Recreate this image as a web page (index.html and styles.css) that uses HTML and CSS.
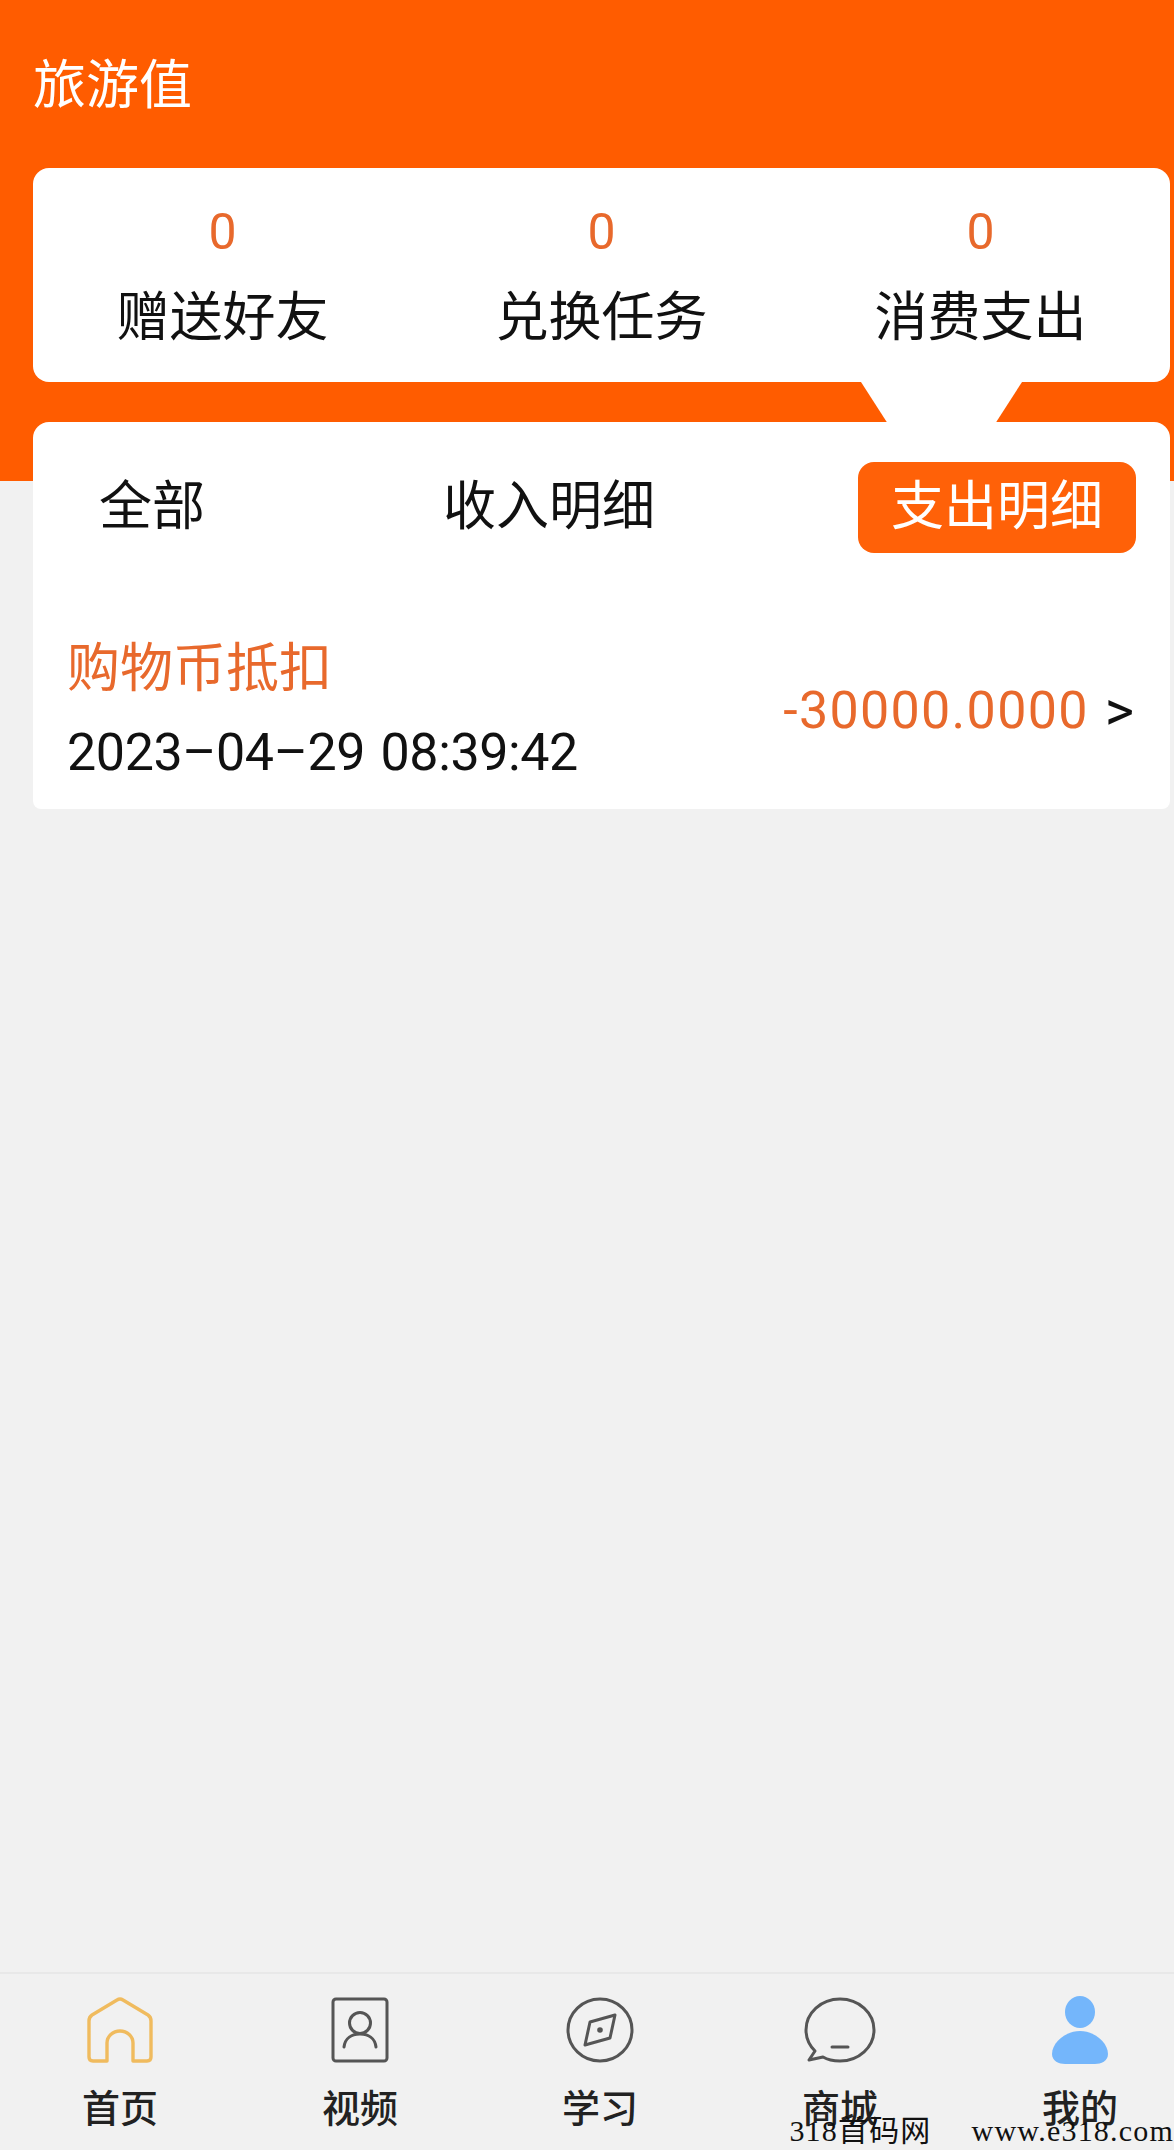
FILE: index.html
```html
<!doctype html>
<html>
  <head>
    <meta charset="utf-8">
    <title>旅游值</title>
    <link rel="stylesheet" href="styles.css">
  </head>
  <body>
    <div class="page">
      <h1 class="title">旅游值</h1>

      <div class="stats">
        <div class="stat"><span class="stat-num">0</span><span class="stat-label">赠送好友</span></div>
        <div class="stat"><span class="stat-num">0</span><span class="stat-label">兑换任务</span></div>
        <div class="stat"><span class="stat-num">0</span><span class="stat-label">消费支出</span></div>
      </div>

      <div class="detail">
        <div class="tabs">
          <div class="tab tab-all">全部</div>
          <div class="tab tab-in">收入明细</div>
          <div class="tab tab-on">支出明细</div>
        </div>
        <div class="record">
          <div class="record-left">
            <div class="record-name">购物币抵扣</div>
            <div class="record-date">2023–04–29 08:39:42</div>
          </div>
          <div class="record-right">
            <span class="record-amount">-30000.0000</span>
            <span class="record-arrow">&gt;</span>
          </div>
        </div>
      </div>

      <div class="nav">
        <div class="nav-item">
          <svg class="icon" width="66" height="66" viewBox="0 0 66 66" fill="none" stroke="#f0bb5e" stroke-width="3.4" stroke-linejoin="round">
            <path d="M30 3 Q33 1 36 3 L61 18 Q64 20 64 24 V60 Q64 64 60 64 H46 V46 A13 12 0 0 0 20 46 V64 H6 Q2 64 2 60 V24 Q2 20 5 18 Z"/>
          </svg>
          <span class="nav-label">首页</span>
        </div>
        <div class="nav-item">
          <svg class="icon" width="58" height="66" viewBox="0 0 58 66" fill="none" stroke="#555" stroke-width="3" stroke-linecap="round">
            <rect x="2" y="2" width="54" height="62" rx="3"/>
            <circle cx="29" cy="26" r="10.5"/>
            <path d="M13 50 C14 41 21 37 29 37 C37 37 44 41 45 50"/>
          </svg>
          <span class="nav-label">视频</span>
        </div>
        <div class="nav-item">
          <svg class="icon" width="68" height="66" viewBox="0 0 68 66" fill="none" stroke="#555" stroke-width="3" stroke-linejoin="round">
            <ellipse cx="34" cy="33" rx="32" ry="31"/>
            <path d="M49 18 L44 41 L19 48 L24 25 Z"/>
            <circle cx="34" cy="33" r="2.8" fill="#555" stroke="none"/>
          </svg>
          <span class="nav-label">学习</span>
        </div>
        <div class="nav-item">
          <svg class="icon" width="72" height="66" viewBox="0 0 72 66" fill="none" stroke="#555" stroke-width="3" stroke-linejoin="round" stroke-linecap="round">
            <path d="M36 2 C17 2 2 16 2 33 C2 42 6 49 11 54 L5 63 L19 60 C24 63 30 64 36 64 C55 64 70 50 70 33 C70 16 55 2 36 2 Z"/>
            <path d="M28 50 H44"/>
          </svg>
          <span class="nav-label">商城</span>
        </div>
        <div class="nav-item">
          <svg class="icon" width="58" height="68" viewBox="0 0 58 68" fill="#74b6fb">
            <ellipse cx="29" cy="16" rx="15" ry="16"/>
            <path d="M29 35 C44 35 57 47 57 58 C57 65 50 68 44 68 H14 C8 68 1 65 1 58 C1 47 14 35 29 35 Z"/>
          </svg>
          <span class="nav-label">我的</span>
        </div>
      </div>

      <div class="watermark">318首码网<span class="watermark-url">www.e318.com</span></div>
    </div>
  </body>
</html>
```

FILE: styles.css
```css
html, body {
  margin: 0;
  padding: 0;
}
body {
  font-family: Roboto, "Noto Sans CJK SC", sans-serif;
  color: #111;
  overflow: hidden;
}
.page {
  position: relative;
  display: flex;
  flex-direction: column;
  width: 1174px;
  height: 2150px;
  overflow: hidden;
  background: linear-gradient(#ff5c00 481px, #f1f1f1 481px);
}
.title {
  margin: 0;
  padding: 48px 0 0 33px;
  height: 168px;
  box-sizing: border-box;
  font-size: 53px;
  line-height: 76px;
  font-weight: 400;
  color: #fff;
}

.stats {
  position: relative;
  display: grid;
  grid-template-columns: repeat(3, 1fr);
  margin: 0 4px 40px 33px;
  height: 214px;
  background: #fff;
  border-radius: 16px;
}
.stats::after {
  content: "";
  position: absolute;
  left: 828px;
  top: 214px;
  width: 161px;
  height: 40px;
  background: #fff;
  clip-path: polygon(0 0, 100% 0, 84% 100%, 16% 100%);
}
.stat {
  display: flex;
  flex-direction: column;
  align-items: center;
  padding-top: 38px;
}
.stat-num {
  font-size: 50px;
  line-height: 52px;
  color: #e8692c;
}
.stat-label {
  margin-top: 24px;
  font-size: 53px;
  line-height: 72px;
}

.detail {
  margin: 0 4px 0 33px;
  height: 387px;
  background: #fff;
  border-radius: 16px 16px 8px 8px;
}
.tabs {
  display: flex;
  align-items: center;
  padding: 40px 34px 0 66px;
  height: 91px;
}
.tab {
  font-size: 53px;
  line-height: 91px;
}
.tab-in {
  margin-left: 238px;
}
.tab-on {
  margin-left: auto;
  padding: 0 33px;
  color: #fff;
  background: #ff6108;
  border-radius: 16px;
}
.record {
  display: flex;
  justify-content: space-between;
  align-items: center;
  padding: 78px 36px 0 34px;
}
.record-name {
  font-size: 53px;
  line-height: 76px;
  color: #e8692c;
}
.record-date {
  margin-top: 8px;
  font-size: 52px;
  line-height: 76px;
  letter-spacing: -0.4px;
  word-spacing: 3px;
}
.record-right {
  display: flex;
  align-items: center;
  gap: 16px;
}
.record-amount {
  font-size: 52px;
  line-height: 76px;
  letter-spacing: 1.3px;
  color: #e8692c;
}
.record-arrow {
  font-size: 56px;
  line-height: 76px;
}

.nav {
  display: grid;
  grid-template-columns: repeat(5, 240px);
  margin-top: auto;
  height: 178px;
  border-top: 2px solid #e8e8e8;
  box-sizing: border-box;
}
.nav-item {
  display: flex;
  flex-direction: column;
  align-items: center;
  padding-top: 22px;
}
.icon {
  display: block;
  height: 68px;
}
.nav-label {
  margin-top: 20px;
  font-size: 38px;
  line-height: 50px;
  font-weight: 500;
  color: #222;
}

.watermark {
  position: absolute;
  right: 0;
  bottom: 4px;
  font-family: "Liberation Serif", "Noto Sans CJK SC", serif;
  font-size: 30px;
  line-height: 30px;
  letter-spacing: 1.2px;
  white-space: nowrap;
  color: #111;
}
.watermark-url {
  margin-left: 40px;
}
```
